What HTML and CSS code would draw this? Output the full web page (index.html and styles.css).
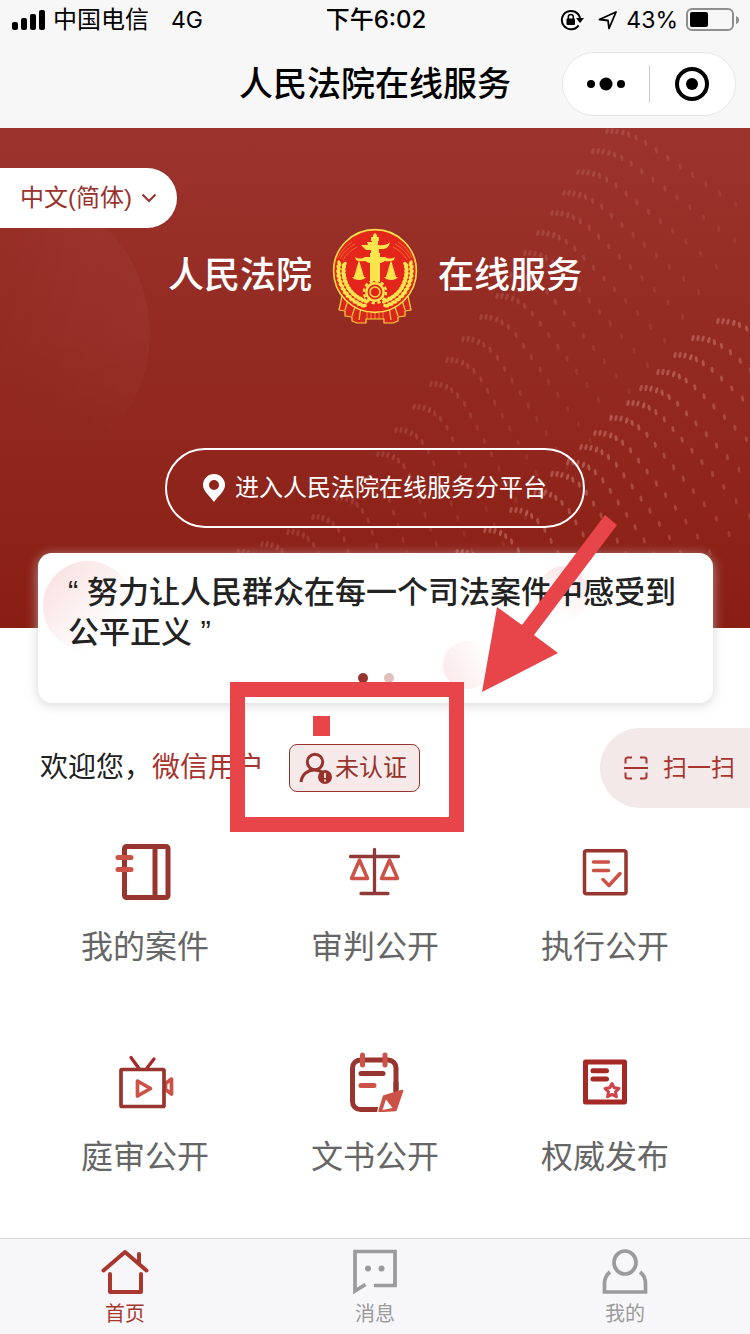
FILE: index.html
```html
<!DOCTYPE html>
<html lang="zh-CN">
<head>
  <meta charset="UTF-8">
  <meta name="viewport" content="width=device-width, initial-scale=1.0">
  <title>人民法院在线服务</title>
  <link rel="stylesheet" href="styles.css">
  <script src="script.js" defer></script>
</head>
<body>
  <div class="page">
    <div class="status-bar">
      <div class="status-left">
        <svg width="33" height="20" viewBox="0 0 33 20">
          <rect x="0" y="12" width="6" height="8" rx="2"/>
          <rect x="9" y="8" width="6" height="12" rx="2"/>
          <rect x="18" y="4" width="6" height="16" rx="2"/>
          <rect x="27" y="0" width="6" height="20" rx="2"/>
        </svg>
        <span>中国电信</span>
        <span class="network">4G</span>
      </div>
      <div class="status-time">下午6:02</div>
      <div class="status-right">
        <svg class="lock" width="24" height="22" viewBox="0 0 24 22">
          <path d="M18.6 16.4A9.2 9.2 0 1 1 20 9" fill="none" stroke="#000" stroke-width="2"/>
          <path d="M16 9h8l-4 5z"/>
          <rect x="6.5" y="9.5" width="8.5" height="6.5" rx="1"/>
          <path d="M8.3 10V8a2.5 2.5 0 0 1 5 0v2" fill="none" stroke="#000" stroke-width="1.5"/>
        </svg>
        <svg width="20" height="20" viewBox="0 0 20 20">
          <path d="M1.5 9.500L18 2L11 18.500L10 10.500Z" fill="none" stroke="#000" stroke-width="1.8" stroke-linejoin="round"/>
        </svg>
        <span>43%</span>
        <svg width="54" height="24" viewBox="0 0 54 24">
          <rect x="1" y="1" width="46" height="21" rx="5" fill="none" stroke="#8e8e8e" stroke-width="2"/>
          <rect x="4" y="4" width="18" height="15" rx="2"/>
          <path d="M50 8q3 1 3 4t-3 4z" fill="#8e8e8e"/>
        </svg>
      </div>
    </div>

    <header class="nav-bar">
      <h1>人民法院在线服务</h1>
      <div class="capsule">
        <button type="button" aria-label="更多">
          <svg width="38" height="14" viewBox="0 0 38 14">
            <circle cx="4" cy="7" r="4"/>
            <circle cx="19" cy="7" r="6.5"/>
            <circle cx="34" cy="7" r="4"/>
          </svg>
        </button>
        <button type="button" aria-label="关闭">
          <svg width="34" height="34" viewBox="0 0 34 34">
            <circle cx="17" cy="17" r="15" fill="none" stroke="#000" stroke-width="4"/>
            <circle cx="17" cy="17" r="6"/>
          </svg>
        </button>
      </div>
    </header>

    <section class="hero">
      <svg class="hero-dots" id="hero-dots" viewBox="0 0 750 500" preserveAspectRatio="xMaxYMin slice"></svg>
      <label class="lang">
        <select aria-label="语言">
          <option>中文(简体)</option>
        </select>
        <svg width="16" height="10" viewBox="0 0 16 10">
          <path d="M1.5 1.5L8 8l6.5-6.5" fill="none" stroke="#97322c" stroke-width="2"/>
        </svg>
      </label>
      <div class="brand">
        <span>人民法院</span>
        <svg width="86" height="96" viewBox="12 12 86 96">
          <!-- ribbon -->
          <g fill="#d9261c" stroke="#f9d53b" stroke-width="1.2" stroke-linejoin="round">
            <path d="M22 80L19 94l6 1v5l7 1v4l5 2h9v-4h18v4h9l5-2v-4l7-1v-5l6-1l-3-14z"/>
            <path d="M25 94l3-10M32 100l4-12M39 104l2-13M85 94l-3-10M78 100l-4-12M71 104l-2-13" fill="none"/>
            <path d="M47 96v7M51 97v6M55 97v6M59 97v6M63 96v7" fill="none" stroke-width=".6"/>
          </g>
          <circle cx="55" cy="55" r="41.4" fill="#e3251b" stroke="#fbe04a" stroke-width="1.6"/>
          <g id="wheat" fill="#fbe44c"></g>
          <g fill="none" stroke="#f08a35" stroke-width=".7">
            <path d="M18 42Q22 32 32 26M20 43Q24 34 35 28M23 44Q27 36 37 31M92 42Q88 32 78 26M90 43Q86 34 75 28M87 44Q83 36 73 31"/>
          </g>
          <!-- pillar and scales -->
          <g fill="#fbe44c">
            <path d="M53 19l2-2l2 2v2h2v4h-1v4q8 1 12-3q-1 6-6 7h-5v4h1v32h-10V37h1v-3h-5l-5-5h7l-1-3h5v-1h-1v-4h2z"/>
            <path d="M35 41q5 3 10 0h20q5 3 10 0l-1 3q-4 2-9 1l-4 2H49l-4-2q-5 1-9-1z"/>
            <path d="M39 44l5 17H34zM71 44l5 17H66z"/>
            <path d="M32 61h14q-2 3-7 3t-7-3zM64 61h14q-2 3-7 3t-7-3z"/>
          </g>
          <circle cx="55" cy="76" r="11" fill="#e3251b" stroke="#fbe44c" stroke-width="2.5" stroke-dasharray="3.2 2.56"/>
          <circle cx="55" cy="76" r="8.7" fill="#e3251b" stroke="#fbe44c" stroke-width="2.5"/>
          <circle cx="55" cy="76" r="5" fill="none" stroke="#fbe44c" stroke-width="1.5"/>
        </svg>
        <span>在线服务</span>
      </div>
      <button type="button" class="enter-btn">
        <svg width="22" height="28" viewBox="0 0 22 28">
          <path fill-rule="evenodd" d="M11 0a11 11 0 0 1 11 11c0 6-6 10-11 17C6 21 0 17 0 11A11 11 0 0 1 11 0zm0 6a5 5 0 1 0 0 10a5 5 0 0 0 0-10z" fill="#fff"/>
        </svg>
        进入人民法院在线服务分平台
      </button>
    </section>

    <section class="quote-card">
      <div class="bubble bubble-big"></div>
      <div class="bubble bubble-mid"></div>
      <div class="bubble bubble-small"></div>
      <p>“ 努力让人民群众在每一个司法案件中感受到公平正义 ”</p>
      <div class="slide-dots"><i class="on"></i><i></i></div>
    </section>

    <section class="welcome">
      <p>欢迎您，<span>微信用户</span></p>
      <button type="button" class="verify-btn">
        <svg width="34" height="34" viewBox="0 0 34 34">
          <g fill="none" stroke="#97322c" stroke-width="3">
            <circle cx="16" cy="11" r="7.7"/>
            <path d="M2 31C3 23 9 19 15 19q6 0 9 3"/>
          </g>
          <circle cx="26" cy="26" r="7" fill="#97322c"/>
          <path d="M26 22v5M26 28.500v2" stroke="#f5d9c8" stroke-width="2"/>
        </svg>
        未认证
      </button>
      <button type="button" class="scan-btn">
        <svg width="24" height="24" viewBox="0 0 24 24">
          <path d="M1.5 7.500V3.500a2 2 0 0 1 2-2h4.500M16 1.500h4.500a2 2 0 0 1 2 2v4M1.500 16.500v4a2 2 0 0 0 2 2h4.500M16 22.500h4.500a2 2 0 0 0 2-2v-4M0 12h24" fill="none" stroke="#a8332f" stroke-width="2"/>
        </svg>
        扫一扫
      </button>
    </section>

    <nav class="menu">
      <a href="#">
        <svg viewBox="0 0 60 60" fill="none" stroke-width="5" stroke-linecap="round">
          <g stroke="#97352e">
            <rect x="9.5" y="4.5" width="43.5" height="51" rx="2"/>
            <path d="M40 5v50" stroke-linecap="butt"/>
          </g>
          <path d="M9.5 10v23" stroke="#fff" stroke-width="6" stroke-linecap="butt"/>
          <path d="M9.5 8v5M9.5 18v7M9.5 30v5" stroke="#97352e" stroke-linecap="butt"/>
          <path d="M3 15.500h13M3 27.500h13" stroke="#cc5248"/>
        </svg>
        我的案件
      </a>
      <a href="#">
        <svg viewBox="0 0 60 60" fill="none" stroke-width="3" stroke-linecap="round" stroke-linejoin="round">
          <path d="M14.500 18L6.500 36.500h16zM44.500 18l-8 18.500h16z" stroke="#cc5248" stroke-width="3.5"/>
          <path d="M29.500 7.500v44M5.500 14.500h48M16 51.500h27" stroke="#8f3a36" stroke-width="3.3"/>
        </svg>
        审判公开
      </a>
      <a href="#">
        <svg viewBox="0 0 60 60" fill="none" stroke-width="3.5" stroke-linecap="round" stroke-linejoin="round">
          <rect x="9.5" y="8.7" width="41.5" height="43" rx="2" stroke="#97352e"/>
          <path d="M18.500 20h15M18.500 28.500h15M28 37.500l6 6l11-12" stroke="#cc5248"/>
        </svg>
        执行公开
      </a>
      <a href="#">
        <svg viewBox="0 0 60 60" fill="none" stroke-width="3.7" stroke-linecap="round" stroke-linejoin="round">
          <path d="M16 5.500l8 11M39 7l-7 9" stroke="#a52a2a" stroke-width="3.3"/>
          <path d="M56.500 27l-6 4.500v6l6 4.500z" stroke="#cc5248"/>
          <rect x="6" y="17.5" width="43" height="37" rx="1" stroke="#97352e"/>
          <path d="M22.500 29l13 7.500l-13 7.500z" stroke="#cc5248"/>
        </svg>
        庭审公开
      </a>
      <a href="#">
        <svg viewBox="0 0 60 60" fill="none" stroke-width="5" stroke-linecap="round">
          <rect x="7.5" y="8" width="43.5" height="49.5" rx="8" stroke="#97352e"/>
          <path d="M17.500 3v10M40 3v10M16 33.500h13" stroke="#cc5248"/>
          <path d="M16 21.500h22" stroke="#97352e"/>
          <path d="M36 43l22-6v23H32z" fill="#fff"/>
          <path d="M51 30v10" stroke="#97352e" stroke-linecap="butt"/>
          <path d="M57 39L39 44.500L34.500 59l16-1z" fill="#cc5248" stroke="#cc5248" stroke-width="2.5" stroke-linejoin="round"/>
          <path d="M41 47.500l-3.500 10.500l10-2z" fill="#fff"/>
        </svg>
        文书公开
      </a>
      <a href="#">
        <svg viewBox="0 0 60 60" fill="none" stroke-width="5" stroke-linecap="round" stroke-linejoin="round">
          <path d="M10.500 10h39v40h-39zM18 18.700h13.500M18 27h13.500" stroke="#a52a26"/>
          <path d="M37 31.500l2.200 4.300l4.800.7l-3.500 3.400l.9 4.800l-4.400-2.300l-4.400 2.300l.9-4.800l-3.500-3.400l4.800-.7z" stroke="#cf444a" stroke-width="3"/>
        </svg>
        权威发布
      </a>
    </nav>

    <footer class="tab-bar">
      <a href="#" class="active">
        <svg viewBox="0 0 48 48" fill="none" stroke="currentColor" stroke-width="4" stroke-linecap="round" stroke-linejoin="round">
          <path d="M2.500 22.500L24 4l21.500 18.500M38 6v9M9 26v18h31V26"/>
        </svg>
        首页
      </a>
      <a href="#">
        <svg viewBox="0 0 48 48" fill="none" stroke="currentColor" stroke-width="3.7">
          <path d="M23 37.500h21V3.500H4V43l10.500-6.500"/>
          <circle cx="17" cy="20.5" r="3" fill="currentColor" stroke="none"/>
          <circle cx="30.5" cy="20.5" r="3" fill="currentColor" stroke="none"/>
        </svg>
        消息
      </a>
      <a href="#">
        <svg viewBox="0 0 48 48" fill="none" stroke="currentColor" stroke-width="3.7">
          <ellipse cx="24" cy="14.5" rx="11" ry="11.5"/>
          <path d="M9 24q-5.500 4-5.500 12v8h41v-8q0-8-5.500-12"/>
        </svg>
        我的
      </a>
    </footer>

    <svg class="marker" width="750" height="860" viewBox="0 0 750 860" aria-hidden="true">
      <rect x="237.5" y="689.5" width="219" height="135" fill="none" stroke="#e8454a" stroke-width="15"/>
      <path d="M313 716h17v20h-17z"/>
      <path d="M605 515l12 10l-83 110l24 18l-76 39l15-85l25 18z"/>
    </svg>
  </div>
</body>
</html>
```
FILE: styles.css
```css
* {
  box-sizing: border-box;
}

body {
  margin: 0;
  background: #fff;
  color: #222;
  font-family: "Liberation Sans", "Noto Sans CJK SC", sans-serif;
  line-height: 40px;
}

h1, p {
  margin: 0;
  font-weight: 400;
}

a {
  color: inherit;
  text-decoration: none;
}

button, select {
  margin: 0;
  padding: 0;
  border: none;
  background: none;
  color: inherit;
  font: inherit;
  cursor: pointer;
}

svg {
  flex: none;
  display: block;
}

.page {
  position: relative;
  display: flex;
  flex-direction: column;
  min-height: 100vh;
}

/* status bar */
.status-bar {
  display: grid;
  grid-template-columns: 1fr auto 1fr;
  align-items: center;
  height: 40px;
  padding: 0 10px 0 12px;
  background: #f7f7f7;
  color: #000;
  font-family: Inter, "Noto Sans CJK SC", sans-serif;
  font-size: 24px;
}

.status-left, .status-right {
  display: flex;
  align-items: center;
  gap: 8px;
}

.status-right {
  justify-content: flex-end;
  font-size: 23px;
}

.lock {
  margin-right: 6px;
}

.network {
  margin-left: 14px;
  font-size: 23px;
}

.status-time {
  font-weight: 500;
}

/* title and capsule */
.nav-bar {
  display: grid;
  grid-template-columns: 1fr auto 1fr;
  align-items: center;
  height: 88px;
  padding: 0 14px;
  background: #f7f7f7;
  color: #000;
}

.nav-bar h1 {
  grid-column: 2;
  font-size: 34px;
  font-weight: 500;
}

.capsule {
  justify-self: end;
  display: flex;
  width: 174px;
  height: 64px;
  padding: 12px 0;
  border: 1px solid #e6e6e6;
  border-radius: 32px;
  background: #fff;
}

.capsule button {
  flex: 1;
  display: flex;
  align-items: center;
  justify-content: center;
}

.capsule button + button {
  border-left: 1px solid #ccc;
}

/* hero */
.hero {
  position: relative;
  display: flex;
  flex-direction: column;
  align-items: center;
  padding: 40px 0 100px;
  overflow: hidden;
  background: linear-gradient(#9b342d, #8a1e14);
  color: #fff;
}

.hero::before {
  content: "";
  position: absolute;
  left: -130px;
  top: 60px;
  width: 280px;
  height: 290px;
  border-radius: 50%;
  background: linear-gradient(100deg, transparent 40%, rgba(255, 255, 255, 0.04));
  -webkit-mask-image: linear-gradient(#000 50%, transparent);
  mask-image: linear-gradient(#000 50%, transparent);
}

.hero-dots {
  position: absolute;
  left: 0;
  top: 0;
  width: 100%;
  height: 100%;
}

.lang {
  position: relative;
  align-self: flex-start;
  display: flex;
  align-items: center;
  gap: 9px;
  height: 60px;
  padding: 0 20px;
  border-radius: 0 30px 30px 0;
  background: #fff;
  color: #97322c;
}

.lang select {
  appearance: none;
  font-size: 24px;
}

.lang svg {
  pointer-events: none;
}

.brand {
  position: relative;
  display: flex;
  align-items: center;
  gap: 20px;
  font-size: 36px;
  font-weight: 500;
}

.enter-btn {
  position: relative;
  display: flex;
  align-items: center;
  justify-content: center;
  gap: 10px;
  height: 80px;
  margin-top: 124px;
  padding: 0 36px;
  border: 2px solid #fff;
  border-radius: 40px;
  font-size: 24px;
}

/* quote card */
.quote-card {
  position: relative;
  margin: -75px 37px 0 38px;
  padding: 20px 30px;
  border-radius: 14px;
  background: #fff;
  box-shadow: 0 2px 12px rgba(200, 200, 200, 0.7);
}

.quote-card p {
  position: relative;
  font-size: 31px;
  font-weight: 500;
}

.bubble {
  position: absolute;
  border-radius: 50%;
  background: linear-gradient(135deg, #f8dcdd, #fff 75%);
}

.bubble-big {
  left: 5px;
  top: 8px;
  width: 90px;
  height: 90px;
}

.bubble-mid {
  right: 125px;
  top: 13px;
  width: 50px;
  height: 56px;
  background: linear-gradient(200deg, #fae3e4, #fff 85%);
}

.bubble-small {
  right: 222px;
  top: 88px;
  width: 48px;
  height: 48px;
  background: linear-gradient(60deg, #fbe6e8, #fff 90%);
}

.slide-dots {
  position: relative;
  display: flex;
  justify-content: center;
  gap: 16px;
  margin-top: 20px;
}

.slide-dots i {
  width: 10px;
  height: 10px;
  border-radius: 50%;
  background: #e0c0bc;
}

.slide-dots .on {
  background: #97322c;
}

/* welcome row */
.welcome {
  display: flex;
  align-items: center;
  margin-top: 25px;
  padding-left: 40px;
  font-size: 28px;
}

.welcome p span {
  color: #a8332f;
}

.verify-btn {
  display: flex;
  align-items: center;
  gap: 2px;
  height: 48px;
  margin-left: 25px;
  padding: 0 12px 0 9px;
  border: 1px solid #97322c;
  border-radius: 8px;
  background: #f5eae9;
  color: #97322c;
  font-size: 24px;
}

.scan-btn {
  display: flex;
  align-items: center;
  gap: 15px;
  height: 80px;
  margin-left: auto;
  padding: 0 15px 0 24px;
  border-radius: 40px 0 0 40px;
  background: #f3e9e8;
  color: #a8332f;
  font-size: 24px;
}

/* menu */
.menu {
  display: grid;
  grid-template-columns: repeat(3, 1fr);
  row-gap: 85px;
  padding: 34px 30px 60px;
  color: #666;
  font-size: 32px;
}

.menu a {
  display: flex;
  flex-direction: column;
  align-items: center;
  gap: 25px;
}

.menu svg {
  width: 60px;
  height: 60px;
}

/* tab bar */
.tab-bar {
  display: grid;
  grid-template-columns: repeat(3, 1fr);
  height: 96px;
  margin-top: auto;
  padding-top: 9px;
  border-top: 1px solid #d8d8da;
  background: #f7f7fa;
  color: #9b9b9b;
  font-size: 20px;
  line-height: 28px;
}

.tab-bar a {
  display: flex;
  flex-direction: column;
  align-items: center;
  gap: 4px;
}

.tab-bar svg {
  width: 48px;
  height: 48px;
}

.tab-bar .active {
  color: #a8382f;
}

/* red box and arrow over the page */
.marker {
  position: absolute;
  left: 0;
  top: 0;
  fill: #e8454a;
  pointer-events: none;
}
```
FILE: script.js
```js
const NS = "http://www.w3.org/2000/svg";

function addEllipse(parent, cx, cy, rx, ry, angle, opacity) {
  const el = document.createElementNS(NS, "ellipse");
  el.setAttribute("cx", cx.toFixed(1));
  el.setAttribute("cy", cy.toFixed(1));
  el.setAttribute("rx", rx);
  el.setAttribute("ry", ry);
  el.setAttribute("transform", `rotate(${angle} ${cx.toFixed(1)} ${cy.toFixed(1)})`);
  if (opacity) el.setAttribute("opacity", opacity.toFixed(2));
  parent.appendChild(el);
}

const STEPS = [5, 5, 6, 6, 8, 11, 13, 14, 15, 15, 16, 17, 19, 20, 21];

// every row starts on the crest of the wave and falls away to the right
function drawWave(parent, starts, slope, growth, opacity) {
  starts.forEach(([x0, y0], row) => {
    const end = Math.min(slope + row * growth, 1.25);
    let x = x0;
    let y = y0;
    STEPS.forEach((step, i) => {
      const fade = i < 3 ? 0.8 : 1 - i * 0.04;
      addEllipse(parent, x, y, 1.5, 3.2, i < 4 ? 15 : -8, opacity * fade);
      const angle = end * Math.min(i / 6, 1);
      x += step * Math.cos(angle);
      y += step * Math.sin(angle);
    });
  });
}

const dots = document.getElementById("hero-dots");
dots.setAttribute("fill", "#e8a8a0");

drawWave(dots, [
  [607, 3], [593, 23], [578, 44], [564, 65], [552, 85], [538, 105],
  [525, 125], [511, 147], [497, 168], [481, 189], [463, 211], [447, 232],
  [431, 256], [414, 279], [396, 302], [378, 326], [358, 350], [337, 370],
  [313, 389], [288, 404], [262, 416], [238, 424]
], 0.6, 0.04, 0.22);

drawWave(dots, [
  [718, 193], [693, 210], [675, 227], [658, 244], [641, 260], [628, 275],
  [611, 290], [595, 305], [581, 319], [568, 334], [552, 346], [535, 364],
  [511, 382], [485, 402], [457, 424]
], 0.7, 0.03, 0.42);

// wheat ears on both sides of the emblem
const wheat = document.getElementById("wheat");
for (let i = 0; i < 13; i++) {
  const deg = 108 + i * 7;
  [36.5, 31.5].forEach((r, side) => {
    const rad = deg * Math.PI / 180;
    const dx = r * Math.cos(rad);
    const dy = r * Math.sin(rad);
    const tilt = side ? 28 : -28;
    addEllipse(wheat, 55 + dx, 55 + dy, 1.8, 3.2, deg + tilt);
    addEllipse(wheat, 55 - dx, 55 + dy, 1.8, 3.2, -deg - tilt);
  });
}
```
